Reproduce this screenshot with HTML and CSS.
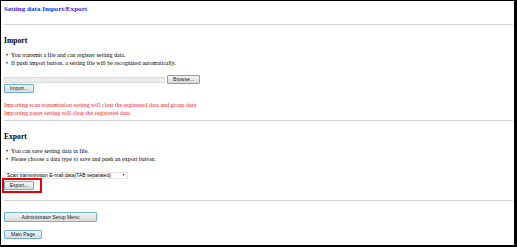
FILE: index.html
```html
<!DOCTYPE html>
<html lang="en">
<head>
    <meta charset="UTF-8">
    <title>Setting data Import/Export</title>
    <link rel="stylesheet" href="styles.css">
</head>
<body>
    <div class="frame">
        <h1 class="page-title">Setting data Import/Export</h1>
        <hr class="rule rule-top">

        <h2 class="section-title">Import</h2>
        <ul class="notes">
            <li>You transmit a file and can register setting data.</li>
            <li>If push import button, a setting file will be recognized automatically.</li>
        </ul>
        <div class="file-row">
            <span class="file-field"></span>
            <button class="btn btn-plain">Browse...</button>
        </div>
        <button class="btn btn-import">Import...</button>
        <p class="warning">Importing scan transmission setting will clear the registered data and group data<br>Importing paper setting will clear the registered data</p>
        <hr class="rule rule-mid">

        <h2 class="section-title">Export</h2>
        <ul class="notes">
            <li>You can save setting data in file.</li>
            <li>Please choose a data type to save and push an export button.</li>
        </ul>
        <div class="select-box">Scan transmission E-mail data(TAB separated)<span class="caret">&#9660;</span></div>
        <div class="marked">
            <button class="btn btn-export">Export...</button>
        </div>
        <hr class="rule rule-bottom">

        <button class="btn btn-wide">Administrator Setup Menu</button>
        <button class="btn btn-main">Main Page</button>
    </div>
</body>
</html>
```

FILE: styles.css
```css
html, body {
    margin: 0;
    padding: 0;
    background: white;
}
.frame {
    box-sizing: border-box;
    width: 517px;
    height: 247px;
    border-top: 1px solid #000;
    border-left: 1px solid #000;
    border-right: 3px solid #000;
    border-bottom: 2px solid #000;
    padding: 0 0 0 3px;
    font-family: "Liberation Serif", serif;
    font-size: 6px;
    color: #000;
    overflow: hidden;
}
.page-title {
    margin: 4px 0 0 0;
    height: 9px;
    line-height: 9px;
    font-size: 7.1px;
    font-weight: bold;
    color: #2626ff;
}
.rule {
    margin: 0;
    width: 509px;
    height: 0;
    border: none;
    border-top: 1px solid #d4d4d4;
}
.rule-top {
    margin-top: 10px;
}
.rule-mid {
    margin-top: 3px;
}
.rule-bottom {
    margin-top: 7px;
}
.section-title {
    margin: 12px 0 0 0;
    height: 7px;
    line-height: 7px;
    font-size: 7.6px;
    font-weight: bold;
}
.notes {
    margin: 7px 0 0 0;
    padding: 0;
    list-style: none;
}
.notes li {
    height: 8px;
    line-height: 8px;
    white-space: nowrap;
}
.notes li::before {
    content: "\2022";
    display: inline-block;
    width: 5px;
    margin-left: 2px;
}
.file-row {
    display: flex;
    align-items: center;
    gap: 2px;
    margin-top: 8px;
    height: 9px;
}
.file-field {
    width: 161px;
    height: 6px;
    background: #ececec;
    border: 1px solid #dcdcdc;
    box-sizing: border-box;
}
.btn {
    display: block;
    box-sizing: border-box;
    height: 9px;
    margin: 0;
    padding: 0 3px;
    font-family: "Liberation Sans", sans-serif;
    font-size: 5px;
    line-height: 7px;
    color: #222;
    background: linear-gradient(#f4f4f4, #dadada);
    border: 1px solid #6fb3dc;
    border-radius: 1px;
    white-space: nowrap;
}
.btn-plain {
    border-color: #9a9a9a;
    width: 33px;
}
.btn-import {
    width: 30px;
}
.warning {
    margin: 8px 0 0 0;
    height: 16px;
    line-height: 8px;
    color: #f01c1c;
}
.select-box {
    display: flex;
    justify-content: space-between;
    align-items: center;
    box-sizing: border-box;
    width: 124px;
    height: 7px;
    margin-top: 9px;
    padding: 0 2px;
    font-family: "Liberation Sans", sans-serif;
    font-size: 5px;
    line-height: 5px;
    border: 1px solid #e4e4e4;
}
.caret {
    font-size: 3px;
}
.marked {
    box-sizing: border-box;
    width: 40px;
    height: 15px;
    margin: -1px 0 0 -2px;
    padding: 1px 6px 1px 0;
    border: 2px solid #ee0000;
}
.btn-export {
    width: 30px;
}
.btn-wide {
    width: 93px;
    height: 10px;
    margin-top: 11px;
}
.btn-main {
    width: 38px;
    margin-top: 8px;
}
```
